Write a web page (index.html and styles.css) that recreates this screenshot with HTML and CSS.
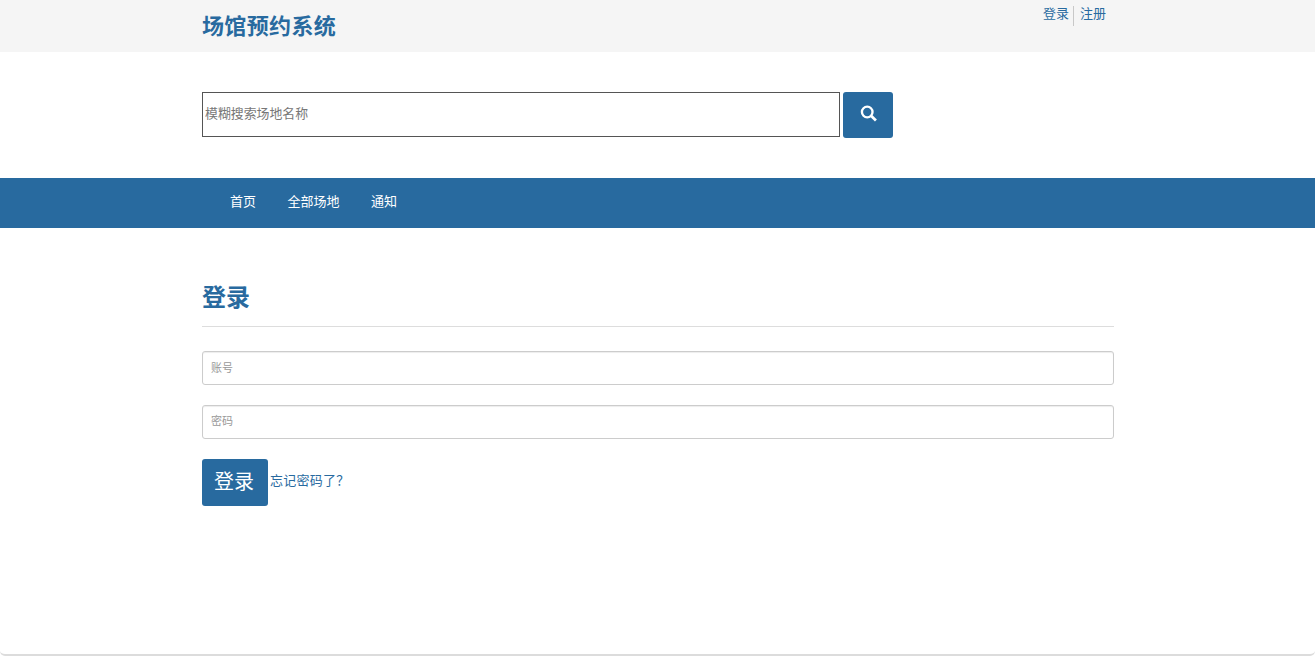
FILE: index.html
```html
<!DOCTYPE html>
<html lang="zh-CN">
<head>
<meta charset="utf-8">
<title>场馆预约系统</title>
<link rel="stylesheet" href="styles.css">
</head>
<body>
<div class="page">
  <header class="topbar">
    <div class="container topbar-inner">
      <div class="logo">场馆预约系统</div>
      <div class="toplinks">
        <a href="#" class="toplink toplink-first">登录</a>
        <a href="#" class="toplink">注册</a>
      </div>
    </div>
  </header>
  <section class="container search">
    <input class="search-input" type="text" placeholder="模糊搜索场地名称">
    <button class="search-btn" type="button" aria-label="搜索">
      <svg width="17" height="17" viewBox="0 0 16 16"><circle cx="6.8" cy="6.6" r="5" fill="none" stroke="#fff" stroke-width="2.2"/><path d="M10.4 10.2 15 14.6" fill="none" stroke="#fff" stroke-width="2.6"/></svg>
    </button>
  </section>
  <nav class="nav">
    <div class="container nav-inner">
      <a href="#" class="nav-item">首页</a>
      <a href="#" class="nav-item">全部场地</a>
      <a href="#" class="nav-item">通知</a>
    </div>
  </nav>
  <main class="container main">
    <h1 class="title">登录</h1>
    <form class="form">
      <input class="field" type="text" placeholder="账号">
      <input class="field field-low" type="text" placeholder="密码">
      <div class="actions">
        <button class="submit" type="button">登录</button>
        <a href="#" class="forgot">忘记密码了？</a>
      </div>
    </form>
  </main>
</div>
</body>
</html>
```
FILE: styles.css
```css
* { box-sizing: border-box; }
html, body { margin: 0; height: 656px; overflow: hidden; background: #fff; }
body { font-family: "Noto Sans CJK SC", "Liberation Sans", sans-serif; }
a { text-decoration: none; color: #286a9f; }
.page { height: 656px; border-bottom: 2px solid #dcdcdc; border-radius: 0 0 5px 5px; background: #fff; }
.container { width: 912px; margin-left: 202px; }
.topbar { height: 52px; background: #f5f5f5; }
.topbar-inner { display: flex; justify-content: space-between; align-items: flex-start; }
.logo { font-size: 22px; font-weight: 700; line-height: 30px; padding-top: 9px; letter-spacing: .35px; color: #286a9f; }
.toplinks { display: flex; align-items: flex-start; padding-top: 6px; padding-right: 8px; }
.toplink { font-size: 13px; line-height: 14px; height: 20px; margin-left: 6px; }
.toplink-first { margin-left: 0; padding-right: 4px; border-right: 1px solid #c8c8c8; }
.search { display: flex; gap: 3px; padding-top: 40px; height: 126px; }
.search-input { width: 638px; height: 45px; border: 1px solid #555; padding: 0 2px 4px; font: 12.9px "Noto Sans CJK SC", sans-serif; outline: 0; background: #fff; }
.search-input::placeholder { color: #777; }
.search-btn { width: 50px; height: 46px; border: 0; border-radius: 3px; background: #286a9f; padding: 0 0 4px; display: flex; align-items: center; justify-content: center; }
.nav { height: 50px; background: #286a9f; }
.nav-inner { display: flex; gap: 31.5px; padding-left: 28px; }
.nav-item { color: #fff; font-size: 13px; line-height: 46px; }
.main { padding-top: 51px; }
.title { margin: 0; height: 48px; font-size: 24px; font-weight: 700; line-height: 34px; color: #286a9f; border-bottom: 1px solid #ddd; }
.form { display: flex; flex-direction: column; gap: 20px; padding-top: 24px; }
.field { width: 100%; height: 34px; border: 1px solid #ccc; border-radius: 3px; padding: 0 8px 2px; font: 11px "Noto Sans CJK SC", sans-serif; outline: 0; box-shadow: inset 0 1px 1px rgba(0,0,0,.075); }
.field-low { padding-bottom: 4px; }
.field::placeholder { color: #999; }
.actions { display: flex; align-items: flex-start; }
.submit { width: 66px; height: 47px; border: 0; border-radius: 3px; background: #286a9f; color: #fff; font: 20px "Noto Sans CJK SC", sans-serif; padding: 0 2px 4px 0; }
.forgot { font-family: "Noto Sans CJK TC", sans-serif; font-size: 13px; line-height: 20px; letter-spacing: .25px; margin: 11px 0 0 2px; }
```
